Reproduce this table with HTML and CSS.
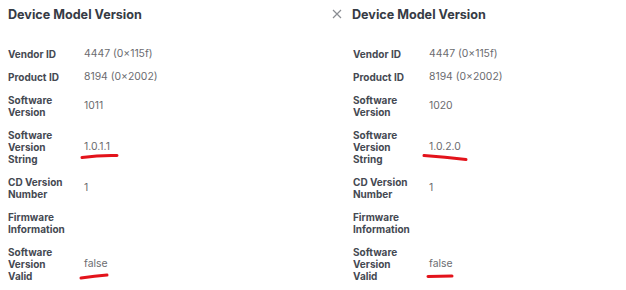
FILE: index.html
```html
<!DOCTYPE html>
<html>
<head>
<meta charset="utf-8">
<link rel="stylesheet" href="styles.css">
</head>
<body>
<div class="page">
  <section class="panel panel-left">
    <header class="head">
      <h2 class="title">Device Model Version</h2>
    </header>
    <dl class="rows">
      <div class="row"><dt>Vendor ID</dt><dd>4447 (0×115f)</dd></div>
      <div class="row"><dt>Product ID</dt><dd>8194 (0×2002)</dd></div>
      <div class="row"><dt>Software Version</dt><dd>1011</dd></div>
      <div class="row"><dt>Software Version String</dt><dd>1.0.1.1</dd></div>
      <div class="row"><dt>CD Version Number</dt><dd>1</dd></div>
      <div class="row"><dt>Firmware Information</dt><dd></dd></div>
      <div class="row"><dt>Software Version Valid</dt><dd>false</dd></div>
    </dl>
  </section>
  <section class="panel panel-right">
    <header class="head">
      <svg class="close" width="10" height="10" viewBox="0 0 10 10"><path d="M1 1L9 9M9 1L1 9" stroke="#8a8d93" stroke-width="1.2" fill="none"/></svg>
      <h2 class="title">Device Model Version</h2>
    </header>
    <dl class="rows">
      <div class="row"><dt>Vendor ID</dt><dd>4447 (0×115f)</dd></div>
      <div class="row"><dt>Product ID</dt><dd>8194 (0×2002)</dd></div>
      <div class="row"><dt>Software Version</dt><dd>1020</dd></div>
      <div class="row"><dt>Software Version String</dt><dd>1.0.2.0</dd></div>
      <div class="row"><dt>CD Version Number</dt><dd>1</dd></div>
      <div class="row"><dt>Firmware Information</dt><dd></dd></div>
      <div class="row"><dt>Software Version Valid</dt><dd>false</dd></div>
    </dl>
  </section>
  <svg class="marks" width="626" height="290" viewBox="0 0 626 290">
    <path d="M82 157.5 Q100 155 117 155.5" stroke="#e3131b" stroke-width="3" fill="none" stroke-linecap="round"/>
    <path d="M424 155.5 Q445 157 466 159.5" stroke="#e3131b" stroke-width="3" fill="none" stroke-linecap="round"/>
    <path d="M81 278 Q95 276 107 275" stroke="#e3131b" stroke-width="3" fill="none" stroke-linecap="round"/>
    <path d="M428 276.5 Q441 276 452 276" stroke="#e3131b" stroke-width="3" fill="none" stroke-linecap="round"/>
  </svg>
</div>
</body>
</html>
```
FILE: styles.css
```css
* { box-sizing: border-box; }
html, body { margin: 0; padding: 0; background: #fff; }
body {
  font-family: Inter, "Open Sans", "Liberation Sans", sans-serif;
  width: 626px;
  height: 290px;
  overflow: hidden;
}
.page {
  position: relative;
  display: flex;
  width: 626px;
  height: 290px;
}
.panel {
  display: flex;
  flex-direction: column;
}
.panel-left {
  width: 320px;
  padding-left: 8px;
}
.panel-right {
  width: 306px;
  padding-left: 12px;
}
.head {
  display: flex;
  align-items: center;
  height: 28px;
}
.close {
  margin-right: 10px;
  margin-top: -1px;
}
.title {
  margin: 0;
  font-size: 12.6px;
  font-weight: 700;
  color: #363b45;
}
.rows {
  margin: 20px 0 0 0;
  display: flex;
  flex-direction: column;
  gap: 11px;
}
.panel-right .rows { padding-left: 21px; }
.row {
  display: flex;
  align-items: center;
}
dt {
  width: 60px;
  margin-right: 16px;
  font-size: 10px;
  line-height: 12px;
  font-weight: 700;
  color: #454952;
}
dd {
  margin: 0;
  font-size: 10.4px;
  line-height: 12px;
  color: #6b6c70;
}
.marks {
  position: absolute;
  left: 0;
  top: 0;
  pointer-events: none;
}
```
